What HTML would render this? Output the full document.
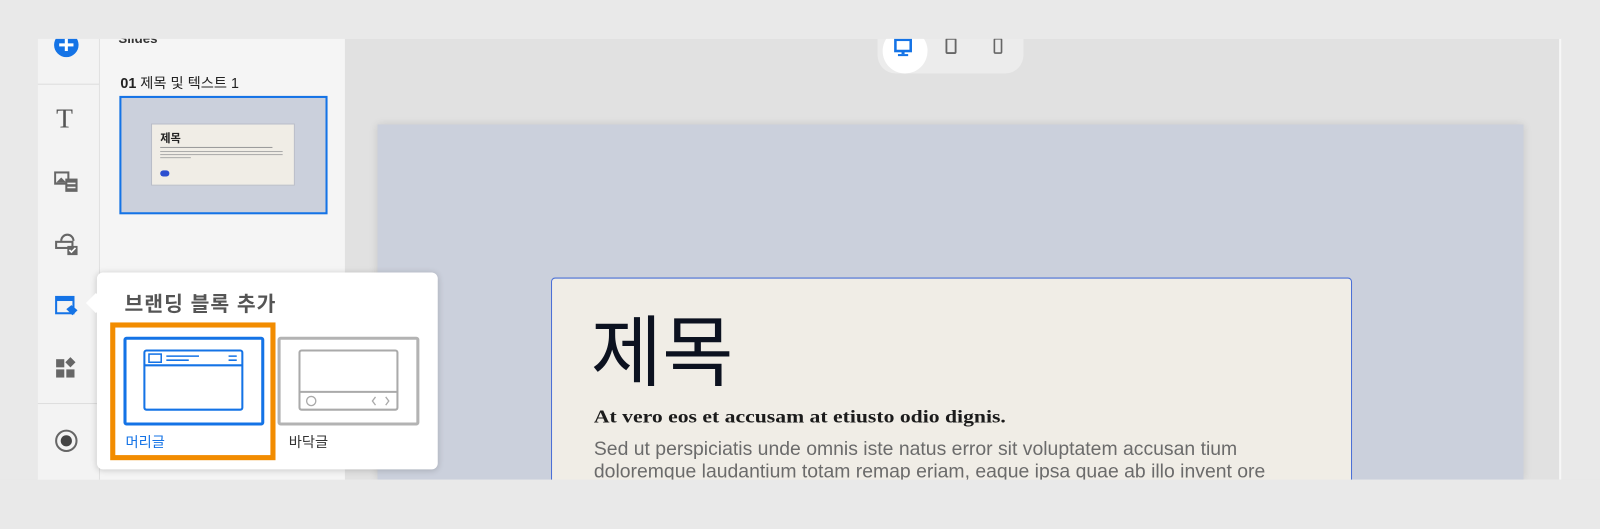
<!DOCTYPE html>
<html><head><meta charset="utf-8"><style>
*{margin:0;padding:0;box-sizing:border-box}
body{width:1600px;height:518px;background:#e9e9e9;position:relative;overflow:hidden;font-family:"Liberation Sans","Noto Sans CJK KR",sans-serif}
#w{position:absolute;left:0;top:0;width:1568px;height:508px;transform:scale(1.0204);transform-origin:0 0}
.abs{position:absolute}
</style></head><body><div id="w">
<!-- canvas -->
<div class="abs" style="left:37px;top:38px;width:1491px;height:432px;background:#e1e1e1"></div>
<div class="abs" style="left:1528px;top:38px;width:2px;height:432px;background:#f7f7f7"></div>
<!-- slide -->
<div class="abs" style="left:370px;top:122px;width:1123px;height:348px;background:#cbd0dc;box-shadow:0 0 8px rgba(0,0,0,.12)"></div>
<div class="abs" style="left:540px;top:272px;width:785px;height:200px;background:#f0ede6;border:1px solid #4a6fd6;border-radius:4px 4px 0 0;overflow:hidden">
 <div class="abs" style="left:38px;top:28px;font-size:76px;color:#0c1220;line-height:1;font-family:'Noto Sans CJK KR',sans-serif">제목</div>
 <div class="abs" style="left:41px;top:125px;font-size:18px;font-weight:bold;color:#1b1b1b;font-family:'Liberation Serif',serif;white-space:nowrap;transform:scaleX(1.18);transform-origin:0 0">At vero eos et accusam at etiusto odio dignis.</div>
 <div class="abs" style="left:41px;top:157px;font-size:19px;color:#6b6b6b;line-height:22px;width:680px">Sed ut perspiciatis unde omnis iste natus error sit voluptatem accusan tium doloremque laudantium totam remap eriam, eaque ipsa quae ab illo invent ore</div>
</div>
<div class="abs" style="left:0;top:470px;width:1600px;height:48px;background:#e9e9e9"></div>
<!-- device toggle -->
<div class="abs" style="left:860px;top:38px;width:143px;height:34px;background:#ececec;border-radius:0 0 18px 18px"></div>
<div class="abs" style="left:865px;top:28px;width:44px;height:44px;background:#fff;border-radius:50%"></div>
<div class="abs" style="left:0;top:0;width:1600px;height:38px;background:#e9e9e9"></div>
<svg class="abs" style="left:876px;top:38px" width="22" height="20"><rect x="1.5" y="1" width="15" height="11" fill="none" stroke="#1473e6" stroke-width="2.5"/><rect x="7.5" y="12" width="3" height="3" fill="#1473e6"/><rect x="4" y="15" width="10" height="2" fill="#1473e6"/></svg>
<svg class="abs" style="left:926px;top:37px" width="14" height="18"><rect x="1.5" y="1" width="9" height="14" rx="1" fill="none" stroke="#666" stroke-width="1.8"/></svg>
<svg class="abs" style="left:973px;top:37px" width="12" height="18"><rect x="1.5" y="1" width="7" height="14" rx="1" fill="none" stroke="#666" stroke-width="1.6"/></svg>
<!-- left icon bar -->
<div class="abs" style="left:37px;top:38px;width:60px;height:432px;background:#f3f3f3"></div>
<div class="abs" style="left:37px;top:82px;width:60px;height:1px;background:#dcdcdc"></div>
<div class="abs" style="left:37px;top:395px;width:60px;height:1px;background:#dcdcdc"></div>
<svg class="abs" style="left:52px;top:38px" width="26" height="20"><circle cx="13" cy="6" r="12" fill="#1473e6"/><rect x="11.5" y="-1" width="3" height="13" fill="#fff"/><rect x="6" y="4.5" width="14" height="3" fill="#fff"/></svg>
<div class="abs" style="left:55px;top:101px;font-size:27px;color:#555;font-family:'Liberation Serif',serif">T</div>
<svg class="abs" style="left:53px;top:166px" width="26" height="24"><rect x="1" y="3" width="13" height="11" fill="none" stroke="#666" stroke-width="2"/><path d="M2 13l5-5 5 5z" fill="#666"/><rect x="11" y="9" width="12" height="13" fill="#666"/><rect x="13" y="13" width="8" height="1.5" fill="#f3f3f3"/><rect x="13" y="17" width="8" height="1.5" fill="#f3f3f3"/></svg>
<svg class="abs" style="left:53px;top:228px" width="26" height="24"><path d="M7 8a6 6 0 0 1 12 0" fill="none" stroke="#666" stroke-width="2"/><rect x="2" y="9" width="16" height="6" fill="none" stroke="#666" stroke-width="2"/><rect x="13" y="13" width="10" height="9" fill="#666"/><path d="M15 17l2 2 4-4" fill="none" stroke="#fff" stroke-width="1.6"/></svg>
<svg class="abs" style="left:53px;top:289px" width="26" height="24"><rect x="2" y="2" width="17" height="16" fill="none" stroke="#1473e6" stroke-width="2"/><rect x="2" y="2" width="17" height="4" fill="#1473e6"/><path d="M12 14l5-4 6 5-5 5z" fill="#1473e6"/></svg>
<svg class="abs" style="left:53px;top:349px" width="26" height="24"><rect x="2" y="3" width="8" height="8" fill="#666"/><rect x="2" y="13" width="8" height="8" fill="#666"/><rect x="12" y="13" width="8" height="8" fill="#666"/><path d="M16 1l5 5-5 5-5-5z" fill="#666"/></svg>
<svg class="abs" style="left:53px;top:420px" width="24" height="24"><circle cx="12" cy="12" r="10" fill="none" stroke="#666" stroke-width="2"/><circle cx="12" cy="12" r="5.5" fill="#444"/></svg>
<!-- slides panel -->
<div class="abs" style="left:98px;top:38px;width:240px;height:432px;background:#f5f5f5"></div>
<div class="abs" style="left:116px;top:30px;font-size:13px;font-weight:bold;color:#333">Slides</div>
<div class="abs" style="left:0;top:0;width:1600px;height:38px;background:#e9e9e9"></div>
<div class="abs" style="left:118px;top:71px;font-size:14px;color:#222"><b>01</b> 제목 및 텍스트 1</div>
<div class="abs" style="left:117px;top:94px;width:204px;height:116px;border:2px solid #1473e6;background:#cbd0dc"></div>
<div class="abs" style="left:148px;top:121px;width:141px;height:61px;background:#f0ede6;border:1px solid #b8bcc8">
 <div class="abs" style="left:8px;top:5px;font-size:11px;font-weight:bold;color:#222">제목</div>
 <div class="abs" style="left:8px;top:22px;width:110px;height:1px;background:#999"></div>
 <div class="abs" style="left:8px;top:26px;width:120px;height:1px;background:#aaa"></div>
 <div class="abs" style="left:8px;top:29px;width:120px;height:1px;background:#aaa"></div>
 <div class="abs" style="left:8px;top:32px;width:30px;height:1px;background:#aaa"></div>
 <div class="abs" style="left:8px;top:45px;width:9px;height:6px;border-radius:3px;background:#2c4fd0"></div>
</div>
<!-- popover -->
<div class="abs" style="left:95px;top:267px;width:334px;height:193px;background:#fff;border-radius:6px;box-shadow:0 1px 6px rgba(0,0,0,.18)"></div>
<div class="abs" style="left:87px;top:290px;width:14px;height:14px;background:#fff;transform:rotate(45deg)"></div>
<div class="abs" style="left:122px;top:282px;font-size:20px;color:#555;font-weight:bold;letter-spacing:1px">브랜딩 블록 추가</div>
<div class="abs" style="left:108px;top:316px;width:162px;height:135px;border:5px solid #f28c00"></div>
<div class="abs" style="left:121px;top:330px;width:138px;height:87px;border:3px solid #1473e6;border-radius:3px"></div>
<svg class="abs" style="left:140px;top:342px" width="100" height="62"><rect x="1.5" y="1.5" width="96" height="58" rx="2" fill="none" stroke="#1473e6" stroke-width="2"/><line x1="1.5" y1="16" x2="97.5" y2="16" stroke="#1473e6" stroke-width="2"/><rect x="6" y="5" width="12" height="8" fill="none" stroke="#1473e6" stroke-width="1.5"/><line x1="23" y1="7" x2="55" y2="7" stroke="#1473e6" stroke-width="1.5"/><line x1="23" y1="11" x2="45" y2="11" stroke="#1473e6" stroke-width="1.5"/><line x1="84" y1="7" x2="92" y2="7" stroke="#1473e6" stroke-width="1.5"/><line x1="84" y1="11" x2="92" y2="11" stroke="#1473e6" stroke-width="1.5"/></svg>
<div class="abs" style="left:123px;top:423px;font-size:14px;color:#1473e6">머리글</div>
<div class="abs" style="left:272px;top:330px;width:139px;height:87px;border:3px solid #b3b3b3;border-radius:3px"></div>
<svg class="abs" style="left:292px;top:342px" width="100" height="62"><rect x="1.5" y="1.5" width="96" height="58" rx="2" fill="none" stroke="#aaa" stroke-width="2"/><line x1="1.5" y1="42" x2="97.5" y2="42" stroke="#aaa" stroke-width="2"/><circle cx="13" cy="51" r="4.5" fill="none" stroke="#aaa" stroke-width="1.3"/><path d="M76 47l-3 4 3 4M86 47l3 4-3 4" fill="none" stroke="#aaa" stroke-width="1.3"/></svg>
<div class="abs" style="left:283px;top:423px;font-size:14px;color:#333">바닥글</div>
</div></body></html>
